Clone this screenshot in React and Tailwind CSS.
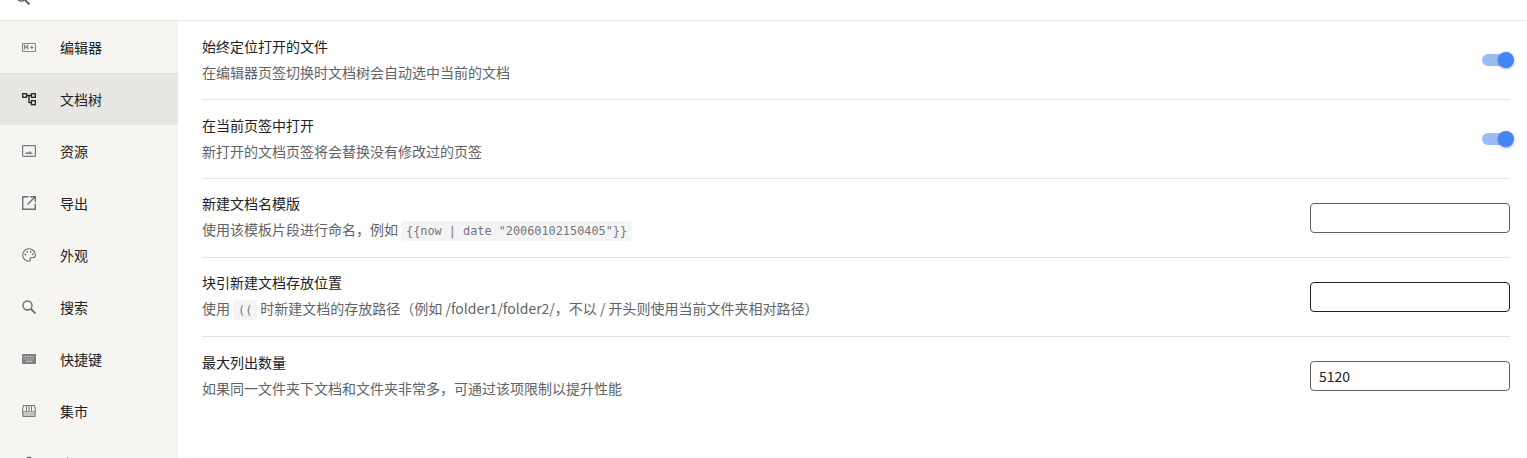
import React from "react";

const Icon = ({ children, className = "text-[#6b6e72]" }) => (
  <svg viewBox="0 0 14 14" className={`w-3.5 h-3.5 shrink-0 ${className}`} fill="none" stroke="currentColor" strokeWidth="1.3">
    {children}
  </svg>
);

const menu = [
  {
    label: "编辑器",
    icon: (
      <Icon className="text-[#85878a]">
        <rect x="0.5" y="3.5" width="13" height="8" rx="0.6" strokeWidth="1.100" />
        <path d="M2.500 9.500V5.500l1.600 2 1.600-2v4M8 7.500h3.500M9.800 5.700v3.600" strokeWidth="1.200" />
      </Icon>
    ),
  },
  {
    label: "文档树",
    active: true,
    icon: (
      <Icon className="text-[#202124]">
        <rect x="0.700" y="1.700" width="3.800" height="3.600" />
        <rect x="9.500" y="1.700" width="3.800" height="3.600" />
        <rect x="9.500" y="8.700" width="3.800" height="4" />
        <path d="M4.500 3.500h5M7 3.500v7h2.500" />
      </Icon>
    ),
  },
  {
    label: "资源",
    icon: (
      <Icon className="text-[#77797c]">
        <rect x="0.600" y="1.600" width="12.800" height="10.800" rx="0.800" strokeWidth="1.200" />
        <path d="M3 10l2-2.200 1.400 1.200L7.800 7l3.200 3z" fill="currentColor" stroke="none" />
      </Icon>
    ),
  },
  {
    label: "导出",
    icon: (
      <Icon>
        <path d="M6.500 .7H.7v12.600h12.600V7.500" strokeWidth="1.400" />
        <path d="M8 .7h5.300V6M13 1L5.500 8.500" strokeWidth="1.400" />
      </Icon>
    ),
  },
  {
    label: "外观",
    icon: (
      <Icon>
        <path d="M7 .700a6.300 6.300 0 0 0 0 12.600c1.200 0 1.500-.900 1.100-1.600-.500-.900 0-2 1.200-2h1.700c1.500 0 2.400-1.100 2.400-2.700C13.400 3.400 10.500.700 7 .700z" strokeWidth="1.100" />
        <circle cx="3.400" cy="6.500" r=".9" fill="currentColor" stroke="none" />
        <circle cx="5.300" cy="3.800" r=".9" fill="currentColor" stroke="none" />
        <circle cx="8.700" cy="3.800" r=".9" fill="currentColor" stroke="none" />
        <circle cx="10.800" cy="6.300" r=".9" fill="currentColor" stroke="none" />
      </Icon>
    ),
  },
  {
    label: "搜索",
    icon: (
      <Icon>
        <circle cx="5.500" cy="5.500" r="4.500" strokeWidth="1.400" />
        <path d="M9 9l4.500 4.500" strokeWidth="1.800" />
      </Icon>
    ),
  },
  {
    label: "快捷键",
    icon: (
      <Icon className="text-[#7c7e80]">
        <rect x="0" y="2" width="14" height="10" rx="0.800" fill="currentColor" stroke="none" />
        <path d="M1.500 4.500h11M1.500 6.800h11" stroke="#d8d8d6" strokeWidth="1" strokeDasharray="1 .6" />
        <path d="M3.500 9.300h7" stroke="#d8d8d6" strokeWidth="1" />
      </Icon>
    ),
  },
  {
    label: "集市",
    icon: (
      <Icon className="text-[#77797c]">
        <path d="M1.500 1.500h11l1 4.500v1.500H.5V6zM4.500 1.500v6M7 1.500v6M9.500 1.500v6" strokeWidth="1.100" />
        <path d="M.500 7.500h13V13H.500z" fill="#c4c4c2" stroke="none" />
        <path d="M1 7.500V12.500h12V7.500" strokeWidth="1" />
      </Icon>
    ),
  },
  {
    label: "账号",
    icon: (
      <Icon>
        <circle cx="7" cy="3.500" r="3" fill="currentColor" stroke="none" />
        <path d="M1 13.500c0-3.500 3-5 6-5s6 1.500 6 5z" fill="currentColor" stroke="none" />
      </Icon>
    ),
  },
];

const Row = ({ title, children, control, last }) => (
  <div className={`flex items-center justify-between h-[79px] border-b ${last ? "border-transparent" : "border-[#e3e3e3]"}`}>
    <div className="flex flex-col gap-1.5 min-w-0 pb-0.5">
      <div className="text-[#202124] leading-5">{title}</div>
      <div className="text-[#5f6368] leading-5 whitespace-nowrap">{children}</div>
    </div>
    {control}
  </div>
);

const Toggle = () => (
  <div className="relative w-7 h-3 rounded-md bg-[#9abcf7] shrink-0">
    <span className="absolute -right-1 -top-0.5 w-4 h-4 rounded-full bg-[#4285f4] shadow-[0_1px_3px_rgba(0,0,0,0.35)]" />
  </div>
);

const Input = ({ focus, value }) => (
  <input
    readOnly
    value={value || ""}
    className={`w-[200px] h-[30px] shrink-0 px-2 rounded border bg-white text-[#202124] outline-none ${focus ? "border-[#202124]" : "border-[#5f6368]"}`}
  />
);

const Code = ({ children }) => (
  <code className="mx-[3px] px-[5px] py-[3px] rounded bg-[#f4f4f4] text-[#73777c] text-[11.85px] font-['DejaVu_Sans_Mono','Liberation_Mono',monospace]">
    {children}
  </code>
);

export default function App() {
  return (
    <div className="h-[458px] w-full overflow-hidden bg-white text-sm font-['Noto_Sans_CJK_SC','Noto_Sans',sans-serif]">
      <div className="h-[21px] border-b border-[#e3e3e3] pl-4 flex items-end overflow-hidden">
        <svg viewBox="0 0 14 14" className="w-3.5 h-3.5 mb-[15px] shrink-0 text-[#5f6368]" fill="none" stroke="currentColor">
          <circle cx="5.500" cy="5.500" r="4.500" strokeWidth="1.500" />
          <path d="M9 9l4.500 4.500" strokeWidth="2" />
        </svg>
      </div>
      <div className="flex">
        <div className="w-[178px] shrink-0 bg-[#f6f5f2] h-[437px] overflow-hidden">
          {menu.map((m) => (
            <div key={m.label} className={`h-[52px] shrink-0 flex items-center gap-[24px] pl-[22px] ${m.active ? "bg-[#e7e6e3]" : ""}`}>
              {m.icon}
              <span className="text-[#202124] leading-5">{m.label}</span>
            </div>
          ))}
        </div>
        <div className="flex-1 min-w-0 pl-6 pr-[17px]">
          <Row title="始终定位打开的文件" control={<Toggle />}>
            在编辑器页签切换时文档树会自动选中当前的文档
          </Row>
          <Row title="在当前页签中打开" control={<Toggle />}>
            新打开的文档页签将会替换没有修改过的页签
          </Row>
          <Row title="新建文档名模版" control={<Input />}>
            使用该模板片段进行命名，例如<Code>{'{{now | date "20060102150405"}}'}</Code>
          </Row>
          <Row title="块引新建文档存放位置" control={<Input focus />}>
            使用<Code>((</Code>时新建文档的存放路径（例如 /folder1/folder2/，不以 / 开头则使用当前文件夹相对路径）
          </Row>
          <Row title="最大列出数量" control={<Input value="5120" />} last>
            如果同一文件夹下文档和文件夹非常多，可通过该项限制以提升性能
          </Row>
        </div>
      </div>
    </div>
  );
}
